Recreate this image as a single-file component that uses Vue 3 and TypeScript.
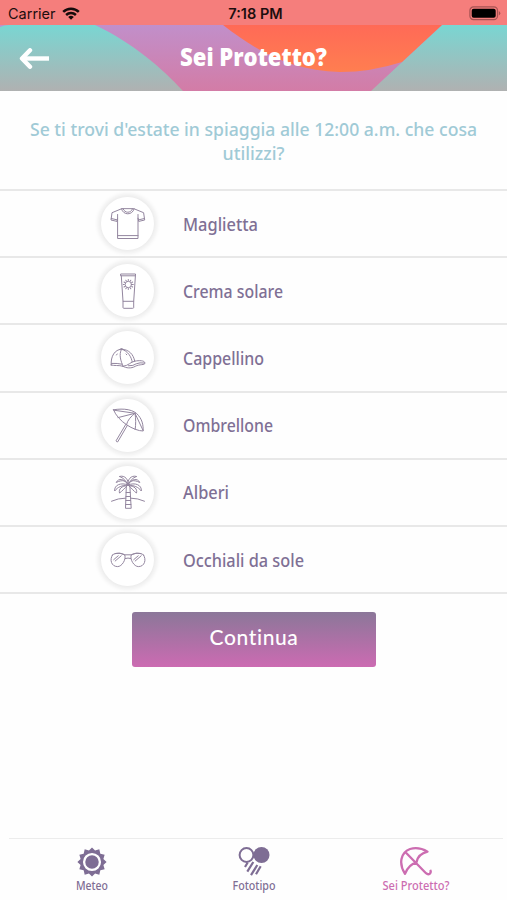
<script setup lang="ts">
interface Item { id: string; label: string; width: number }
const items: Item[] = [
  { id: 'shirt', label: 'Maglietta', width: 75 },
  { id: 'cream', label: 'Crema solare', width: 100 },
  { id: 'cap', label: 'Cappellino', width: 81 },
  { id: 'umbrella', label: 'Ombrellone', width: 90 },
  { id: 'palm', label: 'Alberi', width: 46 },
  { id: 'glasses', label: 'Occhiali da sole', width: 121 },
]
const rays: number[] = Array.from({ length: 12 }, (_, i) => i * 30)
const starPoints: string = Array.from({ length: 24 }, (_, i) => {
  const r = i % 2 ? 11.8 : 14.6
  const a = (i * Math.PI) / 12
  return `${(15 + r * Math.sin(a)).toFixed(2)},${(15 - r * Math.cos(a)).toFixed(2)}`
}).join(' ')
</script>

<template>
  <main class="screen">
    <div class="status">
      <div class="carrier">
        <span>Carrier</span>
        <svg class="wifi" width="18" height="13" viewBox="0 0 18 13">
          <g fill="none" stroke="#160b0b" stroke-width="2.5">
            <path d="M1.2 4.8C5.5.6 12.5.6 16.8 4.8" />
            <path d="M4.1 8c2.8-2.6 7-2.6 9.8 0" />
          </g>
          <path d="M9 12.7 6.2 9.9q2.8-2.2 5.6 0z" fill="#160b0b" />
        </svg>
      </div>
      <span class="time">7:18 PM</span>
      <svg class="battery" width="32" height="15" viewBox="0 0 32 15">
        <rect x=".9" y=".9" width="27.6" height="12.7" rx="3.6" fill="none" stroke="#a65353" stroke-width="1.2" />
        <rect x="2.7" y="2.7" width="24" height="9.1" rx="2" fill="#000" />
        <path d="M29.8 5v4.5q1.5-.7 1.5-2.2T29.8 5" fill="#a65353" />
      </svg>
    </div>

    <header class="header">
      <svg class="art" width="507" height="66" viewBox="0 0 507 66">
        <defs>
          <linearGradient id="teal" x1="0" y1="0" x2="0" y2="1"><stop stop-color="#79d6d2" /><stop offset="1" stop-color="#b0b1b1" /></linearGradient>
          <linearGradient id="violet" x1="0" y1="0" x2="0" y2="1"><stop stop-color="#c18fca" /><stop offset="1" stop-color="#d37ca6" /></linearGradient>
          <linearGradient id="orange" x1="0" y1="0" x2="0" y2="1"><stop stop-color="#ff6a57" /><stop offset="1" stop-color="#ff7e50" /></linearGradient>
        </defs>
        <path d="M0 0H507V66H0z" fill="url(#teal)" />
        <path d="M0 0H9Q4 0 0 2z" fill="#c18fca" />
        <path d="M95 0H442L371 66H183C162 43 133 18 95 0z" fill="url(#violet)" />
        <path d="M223 0H442L402 37Q371 47 340 47C292 46 258 27 223 0z" fill="url(#orange)" />
      </svg>
      <svg class="back" width="31" height="21" viewBox="0 0 31 21" fill="none" stroke="#fff" stroke-width="4.400">
        <path d="M30 10.500H4" /><path d="M11 2.300 3 10.500 11 18.700" stroke-linejoin="round" stroke-linecap="round" />
      </svg>
      <h1><svg width="170" height="34"><text x="0" y="26" textLength="147" lengthAdjust="spacingAndGlyphs">Sei Protetto?</text></svg></h1>
    </header>

    <section class="question">
      <svg width="460" height="54">
        <text x="0" y="19.500" textLength="447" lengthAdjust="spacingAndGlyphs">Se ti trovi d'estate in spiaggia alle 12:00 a.m. che cosa</text>
        <text x="192.500" y="43.500" textLength="62" lengthAdjust="spacingAndGlyphs">utilizzi?</text>
      </svg>
    </section>

    <ul class="list">
      <li v-for="item in items" :key="item.id">
        <span class="disc">
          <svg width="38" height="38" viewBox="0 0 38 38" class="icon">
            <g v-if="item.id === 'shirt'">
              <path d="M12.5 3.800 3 7.700 2 15l6 1.400.6-3.500V33.500H29V12.900l.7 3.500 6-1.400-1.100-7.300-9.500-3.900zM12.500 3.800C14 10.600 23.600 10.600 25.100 3.800M14 3.800C16 8.500 21.600 8.500 23.600 3.800M8.600 30.600H29M8.600 12.900V9.500M29 12.900V9.500M2.300 13.500l6 1.400M35.400 13.500l-6 1.400" />
            </g>
            <g v-else-if="item.id === 'cream'">
              <path d="M12 2h14.500v1.800H12zM12.300 3.800l1.700 25.500h10.700l1.700-25.500M14 29.300v6.200q0 .8 1 .8h8.700q1 0 1-.8v-6.200" />
              <circle cx="19.300" cy="12.500" r="3.200" />
              <path v-for="r in rays" :key="r" d="M19.300 8.500V7.500" :transform="`rotate(${r} 19.300 12.500)`" />
            </g>
            <g v-else-if="item.id === 'cap'">
              <path d="M2.200 26C1.500 17 6 10.600 12.500 10.200C20 10.500 24.500 15.500 25.700 22.200C30 21.300 35.500 21.300 36 24C36 26.300 30.500 25 26.300 27.300C22 29.800 17 29 14 27.300C10 26 5 27 2.200 26zM25.700 22.200C22 22.300 19.500 27 14 27.300M10.500 10.400q1.800-1.900 4 0M12.500 10.200C9.500 16 12 22 14 27.300M12.500 10.200C19 12 22.500 18 23.200 23M2.500 24.400q6-.3 10.700.8M19.500 26.800q5 .2 7.700-2 3.500-1.500 8-.8M7.500 16l.7-1M17 15l.8.800" />
            </g>
            <g v-else-if="item.id === 'umbrella'">
              <path d="M4.500 3.800C15 2 25 3.500 29.500 9.500c4 5 4.700 9.500 4.700 15.500C25 25 9 15.500 4.500 3.800zM9 11.600l17-4.300M26 7.300C22.500 10 18.500 14 17.500 18.500M26 7.300c1 5.500.8 11 .2 16.200M5 4.200 26 7.300l8 17M18.400 19.300 8.700 35.900q-1 .2-1.700-1L16.700 18.500" />
            </g>
            <g v-else-if="item.id === 'palm'">
              <path d="M17.300 13.500 16.500 35.300h5.700L20.900 13.500M17.100 19.500h4.100M17 23.500h4.400M16.900 27.500h4.700M16.700 31.500h5.200" />
              <path d="M19 12C18 8 14 6 7.200 9.500C9.500 4.800 15.500 5.500 19 12zM19 12C12 9 5 12 5.700 18C9 13.800 12.500 12.500 19 12zM18.500 12.500C12.500 13 9.500 16 10.500 20C13 18.500 15 15.500 18.500 12.500zM19 12C20 7 16 1.800 10.300 3.500C14.500 5 16.500 7 19 12zM19 12C18 7 22 1.800 27.700 3.500C23.500 5 21.500 7 19 12zM19 12C20 8 24 6 30.800 9.500C28.500 4.800 22.500 5.500 19 12zM19 12C26 9 33 12 32.300 18C29 13.800 25.500 12.500 19 12zM19.500 12.500C25.500 13 28.500 16 27.500 20C25 18.500 23 15.500 19.500 12.500zM2.500 28.200Q9 25.200 16.800 25.100M21.500 25.100Q29 25.200 35.500 28.200" />
            </g>
            <g v-else>
              <path d="M3.500 14C6 11.500 12.500 11.700 15.800 14C17.200 18.500 13 25.600 8.600 25.600C2.200 25.600.4 18.500 3.500 14zM34.500 14C32 11.500 25.500 11.700 22.200 14C20.800 18.500 25 25.600 29.400 25.600C35.800 25.600 37.600 18.500 34.500 14zM6 12.500q5-1.200 9.800 1.300h6.400q4.800-2.500 9.800-1.300M16.300 17.500q2.700-1 5.400 0M4.700 18.700l4.500-3.900M6.200 20l6-5.200M24.700 18.700l4.500-3.900M26.200 20l6-5.200" />
            </g>
          </svg>
        </span>
        <svg class="label" width="140" height="28"><text x="0" y="20.500" :textLength="item.width" lengthAdjust="spacingAndGlyphs">{{ item.label }}</text></svg>
      </li>
    </ul>

    <button class="continue" type="button">Continua</button>

    <nav class="tabs">
      <a>
        <svg width="30" height="30" viewBox="0 0 30 30"><polygon :points="starPoints" fill="#7e6d94" /><circle cx="15" cy="15" r="7.900" fill="#7e6d94" stroke="#fff" stroke-width="2.300" /></svg>
        <svg class="caption" width="80" height="18"><text x="24" y="13" textLength="32" lengthAdjust="spacingAndGlyphs">Meteo</text></svg>
      </a>
      <a>
        <svg width="34" height="30" viewBox="0 0 34 30"><circle cx="9.500" cy="8" r="6.900" fill="none" stroke="#7e6d94" stroke-width="2" /><circle cx="24.500" cy="8" r="8" fill="#7e6d94" /><path d="m8 20 2.700-4.500M10.300 24.700l6-9.700M14 28.200l6.300-10.200M19 27.200l4.700-8" fill="none" stroke="#7e6d94" stroke-width="2.200" /></svg>
        <svg class="caption" width="80" height="18"><text x="18.500" y="13" textLength="43" lengthAdjust="spacingAndGlyphs">Fototipo</text></svg>
      </a>
      <a class="active">
        <svg width="34" height="30" viewBox="0 0 34 30" fill="none" stroke="#cc6db1" stroke-width="2.300" stroke-linejoin="round"><path d="M6 26.800C-.5 17 1.500 5.500 11 2Q20-.5 28.500 4.700Q19 7 17.500 15.300Q9.500 17.500 6 26.800zM7 5.800 27 26.200q2 1.800 3.800.5 1.700-1.600.3-3.700" /></svg>
        <svg class="caption" width="80" height="18"><text x="6.500" y="13" textLength="67" lengthAdjust="spacingAndGlyphs">Sei Protetto?</text></svg>
      </a>
    </nav>
  </main>
</template>

<style>
body { background: #fefefe; }
</style>
<style scoped>
.screen { width: 507px; height: 900px; overflow: hidden; display: flex; flex-direction: column; background: #fefefe; font-family: "Noto Sans", sans-serif; }
.status { height: 25px; flex: none; display: grid; grid-template-columns: 1fr auto 1fr; align-items: center; padding: 2px 6px 0 8px; box-sizing: border-box; background: #f57e7c; font: 14.500px Inter, sans-serif; color: #1d0e0e; }
.carrier { display: flex; align-items: center; gap: 6px; }
.time { font-weight: 600; position: relative; left: 1px; }
.battery { justify-self: end; }
.header { height: 66px; flex: none; display: grid; grid-template-columns: 180px 1fr; align-items: center; position: relative; }
.art { position: absolute; inset: 0; }
.back { position: relative; margin-left: 19px; }
h1 { position: relative; margin: 0; height: 36px; }
h1 svg, .question svg, .label, .caption { overflow: visible; }
h1 text { font: 800 25.500px "Open Sans", sans-serif; fill: #fff; }
.question { height: 98px; flex: none; box-sizing: border-box; padding: 25px 0 0 30px; }
.question text { font: 500 18.500px "Noto Sans", sans-serif; fill: #a0cad6; }
.list { list-style: none; margin: 0; padding: 0; border-top: 2px solid #e8e8e8; }
.list li { height: 67.200px; box-sizing: border-box; border-bottom: 2px solid #e8e8e8; display: flex; align-items: center; padding-left: 101px; }
.disc { width: 53px; height: 53px; border-radius: 50%; background: #fff; box-shadow: 0 0 4px 3px #ececec; display: grid; place-items: center; flex: none; }
.icon { fill: none; stroke: #93869f; stroke-width: 1; stroke-linejoin: round; stroke-linecap: round; }
.label { margin-left: 29px; }
.label text { font: 500 18px "Noto Sans", sans-serif; fill: #7f7095; }
.continue { flex: none; align-self: center; width: 244px; height: 55px; margin: 18px 0 0 1px; padding: 0 0 6px; border: 0; border-radius: 3px; color: #fff; background: linear-gradient(#8b7799, #cc6bb2); font: 500 21px Lato, sans-serif; letter-spacing: .6px; }
.tabs { height: 62px; flex: none; margin: auto 4px 0 9px; border-top: 1px solid #ececec; display: grid; grid-template-columns: repeat(3, 162px); padding: 8px 0 0 2px; box-sizing: border-box; }
.tabs a { display: flex; flex-direction: column; align-items: center; }
.tabs text { font: 500 12px "Noto Sans", sans-serif; fill: #7e6d94; }
.tabs .active text { fill: #cc6db1; }
</style>
